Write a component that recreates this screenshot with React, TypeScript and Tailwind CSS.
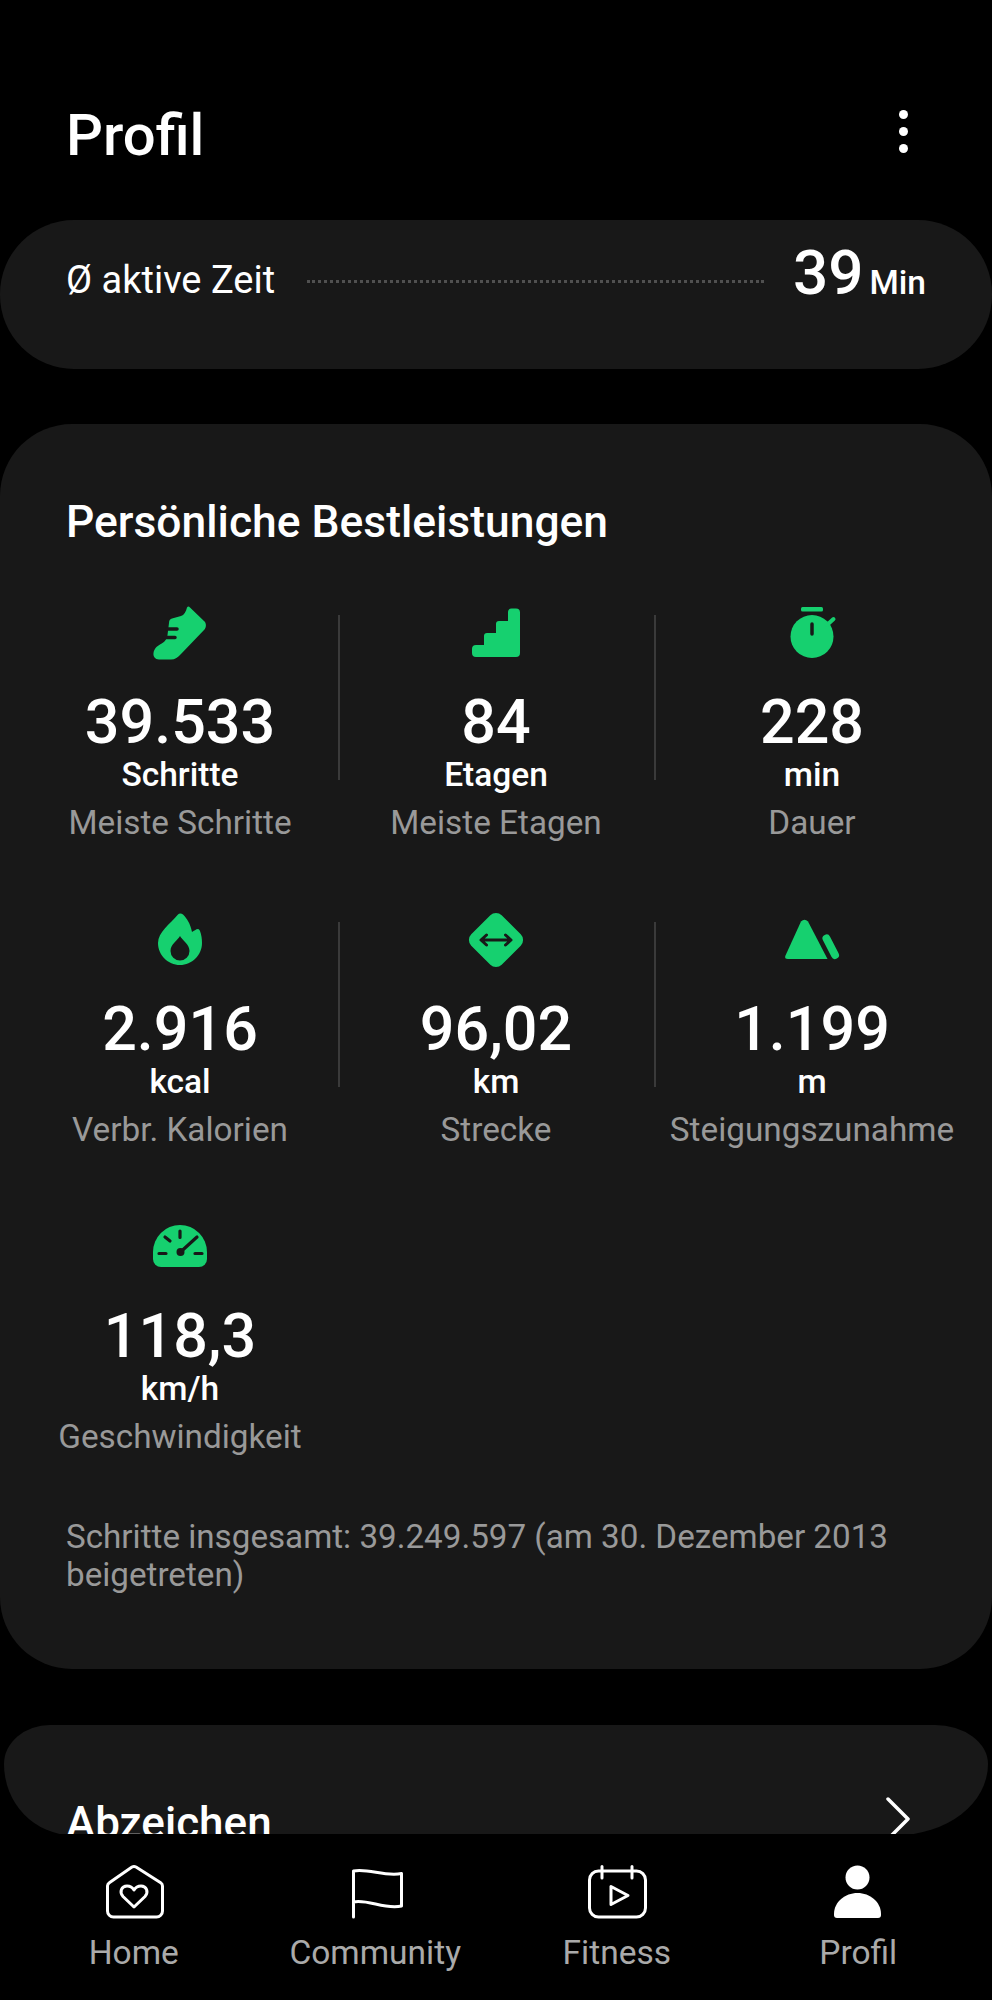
import React from "react";

const GREEN = "#16d06f";
const CARD = "#181818";

const ShoeIcon = () => (
  <svg className="h-[60px] w-[60px]" viewBox="150 603 60 60">
    <path
      fill={GREEN}
      d="M187 607.5C188 606 189 606.5 190 607.5L204 621C206.5 623 206.5 627 204.5 629.5L181 654C178 657.5 175 659.5 171 659.5L159 659.5C155 659.5 153 656.5 153.5 653C154 649 157 646 160 644.5C165 642 167 639 167.5 635L169 623C169 620 170.5 619 172 618.5L181 616C184 615 186 612 187 607.5Z"
    />
    <path stroke={CARD} strokeWidth="3.5" strokeLinecap="round" d="M167 629H177M164 637.5H175" />
  </svg>
);

const StairsIcon = () => (
  <svg className="h-[60px] w-[60px]" viewBox="466 603 60 60">
    <path
      fill={GREEN}
      d="M476 645H484V636a3 3 0 0 1 3-3H496V624a3 3 0 0 1 3-3H508V612a3.5 3.5 0 0 1 3.5-3.5H516a4 4 0 0 1 4 4V653a4 4 0 0 1-4 4H476a4 4 0 0 1-4-4V649a4 4 0 0 1 4-4Z"
    />
  </svg>
);

const TimerIcon = () => (
  <svg className="h-[60px] w-[60px]" viewBox="782 603 60 60">
    <circle cx="812" cy="636.5" r="21.5" fill={GREEN} />
    <rect x="801" y="607" width="22" height="4.5" rx="1.5" fill={GREEN} />
    <path stroke={GREEN} strokeWidth="4" strokeLinecap="round" d="M827 625L833.5 619" />
    <path stroke={CARD} strokeWidth="3.5" strokeLinecap="round" d="M812 624V634" />
  </svg>
);

const FlameIcon = () => (
  <svg className="h-[60px] w-[60px]" viewBox="150 910 60 60">
    <path
      fill={GREEN}
      d="M178 914.5C179 913 181.5 913 183 914.5C187 918.5 190 923 192 932C194 931 196 929 198 929C199 929 199.5 930 200 931C201.5 935 202 939 202 943C202 955 192 965 180 965C168 965 158 955 158 943C158 932 170 924 178 914.5Z"
    />
    <path fill={CARD} d="M180 936C182 940 189.5 944 189.5 951A9.5 9.5 0 0 1 170.5 951C170.5 944 178 940 180 936Z" />
  </svg>
);

const DistanceIcon = () => (
  <svg className="h-[60px] w-[60px]" viewBox="466 910 60 60">
    <rect x="474.5" y="918.5" width="43" height="43" rx="8" fill={GREEN} transform="rotate(45 496 940)" />
    <path
      fill="none"
      stroke={CARD}
      strokeWidth="3"
      strokeLinecap="round"
      strokeLinejoin="round"
      d="M482 940H510M486.5 935L481 940L486.5 945M505.5 935L511 940L505.5 945"
    />
  </svg>
);

const MountainIcon = () => (
  <svg className="h-[60px] w-[60px]" viewBox="782 910 60 60">
    <path fill={GREEN} d="M801 921.5Q804.5 918 808 921.5L827.5 959H788Q784 959 785.5 955.5Z" />
    <path stroke={GREEN} strokeWidth="8" strokeLinecap="round" d="M826.500 938.500L835 955" />
  </svg>
);

const GaugeIcon = () => (
  <svg className="h-[60px] w-[60px]" viewBox="150 1217 60 60">
    <path fill={GREEN} d="M153 1252A27 27 0 0 1 207 1252V1259a8 8 0 0 1-8 8H161a8 8 0 0 1-8-8Z" />
    <circle cx="180.5" cy="1252" r="4" fill={CARD} />
    <path
      stroke={CARD}
      strokeWidth="3.2"
      strokeLinecap="round"
      d="M180.5 1252L197 1237M159 1253.5H166M195 1253.5H202M180 1231V1237.5M165 1237L170 1241"
    />
  </svg>
);

const stats = [
  { icon: <ShoeIcon />, value: "39.533", unit: "Schritte", label: "Meiste Schritte" },
  { icon: <StairsIcon />, value: "84", unit: "Etagen", label: "Meiste Etagen" },
  { icon: <TimerIcon />, value: "228", unit: "min", label: "Dauer" },
  { icon: <FlameIcon />, value: "2.916", unit: "kcal", label: "Verbr. Kalorien" },
  { icon: <DistanceIcon />, value: "96,02", unit: "km", label: "Strecke" },
  { icon: <MountainIcon />, value: "1.199", unit: "m", label: "Steigungszunahme" },
  { icon: <GaugeIcon />, value: "118,3", unit: "km/h", label: "Geschwindigkeit" },
];

const navStroke = {
  fill: "none",
  stroke: "#fff",
  strokeWidth: 3,
  strokeLinecap: "round" as const,
  strokeLinejoin: "round" as const,
};

const navItems = [
  {
    label: "Home",
    icon: (
      <svg className="h-[60px] w-[60px]" viewBox="104 1862 60 60">
        <path
          {...navStroke}
          d="M107.5 1886a4 4 0 0 1 1.8-3.3L132 1867a4 4 0 0 1 4 0L160.700 1882.700a4 4 0 0 1 1.800 3.300V1911a6 6 0 0 1-6 6H113.500a6 6 0 0 1-6-6Z"
        />
        <path
          {...navStroke}
          d="M134 1907L123 1896.500C119 1892 121.500 1886 127 1886C130 1886 132.500 1887.500 134 1890C135.500 1887.500 138 1886 141 1886C146.500 1886 149 1892 145 1896.500Z"
        />
      </svg>
    ),
  },
  {
    label: "Community",
    icon: (
      <svg className="h-[60px] w-[60px]" viewBox="345 1862 60 60">
        <path {...navStroke} d="M353.500 1917V1871C368 1868 385 1877 401.500 1873.500V1906C385 1910 368 1899 353.500 1902" />
      </svg>
    ),
  },
  {
    label: "Fitness",
    icon: (
      <svg className="h-[60px] w-[60px]" viewBox="587 1862 60 60">
        <rect {...navStroke} x="589.500" y="1871" width="56" height="46" rx="9" />
        <path {...navStroke} d="M602 1866.500V1878M632 1866.500V1878" />
        <path {...navStroke} d="M611 1886.500V1904.500L628 1895.500Z" />
      </svg>
    ),
  },
  {
    label: "Profil",
    icon: (
      <svg className="h-[60px] w-[60px]" viewBox="828 1862 60 60">
        <circle cx="857.500" cy="1877.500" r="12" fill="#fff" />
        <path
          fill="#fff"
          d="M834 1914C834 1902 845 1893 857.500 1893C870 1893 881 1902 881 1914V1915a3 3 0 0 1-3 3H837a3 3 0 0 1-3-3Z"
        />
      </svg>
    ),
  },
];

export default function App() {
  return (
    <div className="flex h-[2000px] w-[992px] flex-col overflow-hidden bg-black font-[Roboto,sans-serif] text-white">
      <div className="h-[1834px] shrink-0 overflow-hidden">
        {/* Header */}
        <div className="flex items-center justify-between pl-[66px] pr-[84px] pt-[102px]">
          <h1 className="text-[58px] font-medium leading-[66px]">Profil</h1>
          <div className="-mt-2 flex flex-col gap-2">
            <span className="h-[9px] w-[9px] rounded-full bg-white"></span>
            <span className="h-[9px] w-[9px] rounded-full bg-white"></span>
            <span className="h-[9px] w-[9px] rounded-full bg-white"></span>
          </div>
        </div>

        {/* Active time */}
        <div className="mt-[52px] flex h-[149px] items-baseline rounded-[74px] bg-[#181818] pl-[66px] pr-[66px] pt-[18px]">
          <span className="-translate-y-px text-[38px] leading-[44px]">Ø aktive Zeit</span>
          <span className="ml-[32px] mr-[29px] mt-[42px] flex-1 self-start border-t-[3px] border-dotted border-[#505050]"></span>
          <span className="text-[62px] font-medium leading-[70px]">39</span>
          <span className="ml-[6px] text-[33.5px] font-medium leading-[40px]">Min</span>
        </div>

        {/* Personal bests */}
        <div className="mt-[55px] h-[1245px] rounded-[72px] bg-[#181818] pt-[73px]">
          <h2 className="pl-[66px] text-[44.4px] font-medium leading-[50px]">Persönliche Bestleistungen</h2>
          <div className="mt-[56px] grid grid-cols-3 gap-y-[68px] px-[22px]">
            {stats.map((s, i) => (
              <div key={s.label} className="flex">
                <div className="flex flex-1 flex-col items-center">
                  <div className="mb-[25px] h-[60px]">{s.icon}</div>
                  <div className="text-[61px] font-medium leading-[69px]">{s.value}</div>
                  <div className="text-[33.5px] font-medium leading-[36px]">{s.unit}</div>
                  <div className="mt-[11px] text-[33.3px] leading-[38px] text-[#999999]">{s.label}</div>
                </div>
                {i < 6 && i % 3 !== 2 && (
                  <div className="-mr-[2px] mt-3 h-[165px] w-[2px] bg-[#3a3a3a]"></div>
                )}
              </div>
            ))}
          </div>
          <p className="mt-[62px] px-[66px] text-[33.2px] leading-[38px] text-[#999999]">
            Schritte insgesamt: 39.249.597 (am 30. Dezember 2013 beigetreten)
          </p>
        </div>

        {/* Badges, cut off by the nav */}
        <div className="mx-1 mt-[56px] flex h-[110px] justify-between rounded-[46px_53px_91px_68px/39px_39px_71px_71px] bg-[#181818] pl-[62px] pr-[78px] pt-[73px]">
          <span className="text-[44px] font-medium leading-[50px]">Abzeichen</span>
          <svg className="-mt-[1px] h-[44px] w-[24px]" viewBox="884 1800 24 44">
            <path fill="none" stroke="#fff" strokeWidth="3.5" strokeLinecap="round" strokeLinejoin="round" d="M886 1802L906 1822L886 1842" />
          </svg>
        </div>
      </div>

      {/* Bottom nav */}
      <nav className="grid flex-1 grid-cols-4 bg-black px-[13px] pt-[28px]">
        {navItems.map((n) => (
          <div key={n.label} className="flex flex-col items-center">
            {n.icon}
            <span className="mt-[12px] text-[33.5px] leading-[38px] text-[#aaaaaa]">{n.label}</span>
          </div>
        ))}
      </nav>
    </div>
  );
}
